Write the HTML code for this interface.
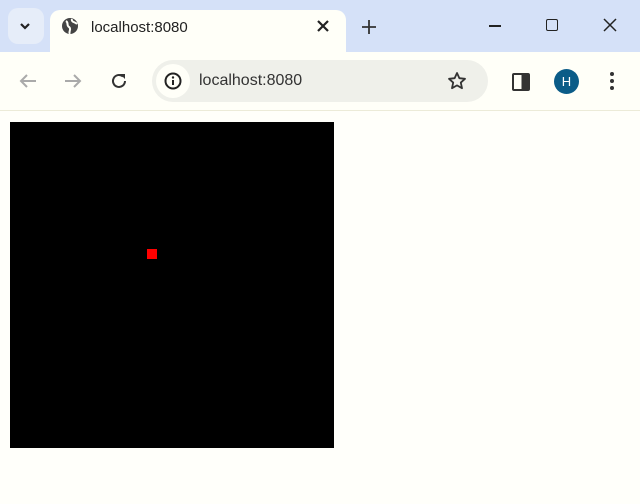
<!DOCTYPE html>
<html><head><style>
body{margin:0;width:640px;height:504px;background:#fffffa;font-family:"Liberation Sans",sans-serif;position:relative;overflow:hidden}
.a{position:absolute}
</style></head><body>
<div class="a" style="left:0;top:0;width:640px;height:52px;background:#d5e1f8"></div>
<div class="a" style="left:8px;top:8px;width:36px;height:36px;border-radius:10px;background:#e6edf9"></div>
<svg class="a" style="left:18px;top:19px" width="14" height="14"><path d="M3 5l4 4 4-4" stroke="#222" stroke-width="2.2" fill="none"/></svg>
<div class="a" style="left:50px;top:10px;width:296px;height:44px;background:#fffff8;border-radius:10px 10px 0 0"></div>
<svg class="a" style="left:61px;top:17px" width="18" height="18"><circle cx="9" cy="9" r="8" fill="#444"/><path d="M5 4c3 2 0 4 3 6s-1 5 1 7M11 2c-1 3 3 3 5 5" stroke="#fffff8" stroke-width="2" fill="none"/></svg>
<div class="a" style="left:91px;top:19px;font-size:15px;color:#222">localhost:8080</div>
<svg class="a" style="left:316px;top:19px" width="14" height="14"><path d="M2 2l10 10M12 2L2 12" stroke="#222" stroke-width="2.2"/></svg>
<svg class="a" style="left:361px;top:19px" width="16" height="16"><path d="M8 1v14M1 8h14" stroke="#333" stroke-width="1.8"/></svg>
<div class="a" style="left:489px;top:25px;width:12px;height:2px;background:#222"></div>
<div class="a" style="left:546px;top:19px;width:10px;height:10px;border:1.5px solid #222;border-radius:2px"></div>
<svg class="a" style="left:603px;top:18px" width="14" height="14"><path d="M1 1l12 12M13 1L1 13" stroke="#222" stroke-width="1.5"/></svg>
<div class="a" style="left:0;top:52px;width:640px;height:58px;background:#fffff8"></div>
<div class="a" style="left:0;top:110px;width:640px;height:1px;background:#ecebd8"></div>
<svg class="a" style="left:18px;top:72px" width="20" height="18"><path d="M18 9H3M9 3L3 9l6 6" stroke="#aaa" stroke-width="2" fill="none"/></svg>
<svg class="a" style="left:63px;top:72px" width="20" height="18"><path d="M2 9h15M11 3l6 6-6 6" stroke="#aaa" stroke-width="2" fill="none"/></svg>
<svg class="a" style="left:109px;top:71px" width="20" height="20"><path d="M16 10a6 6 0 1 1-2-4.5" stroke="#333" stroke-width="2" fill="none"/><path d="M11 3h5v5z" fill="#333"/></svg>
<div class="a" style="left:152px;top:60px;width:336px;height:42px;border-radius:21px;background:#eff0ea"></div>
<div class="a" style="left:156px;top:64px;width:34px;height:34px;border-radius:17px;background:#fffff8"></div>
<svg class="a" style="left:164px;top:72px" width="18" height="18"><circle cx="9" cy="9" r="7.5" stroke="#222" stroke-width="2" fill="none"/><path d="M9 8v5" stroke="#222" stroke-width="2"/><circle cx="9" cy="5.5" r="1.2" fill="#222"/></svg>
<div class="a" style="left:199px;top:72px;font-size:16px;color:#333">localhost:8080</div>
<svg class="a" style="left:447px;top:71px" width="20" height="20"><path d="M10 2l2.4 5.2 5.6.6-4.2 3.8 1.2 5.6L10 14.4 5 17.2l1.2-5.6L2 7.8l5.6-.6z" stroke="#333" stroke-width="1.8" fill="none" stroke-linejoin="round"/></svg>
<div class="a" style="left:512px;top:73px;width:14px;height:14px;border:2px solid #333;border-radius:2px;background:linear-gradient(90deg,transparent 55%,#333 55%)"></div>
<div class="a" style="left:554px;top:69px;width:25px;height:25px;border-radius:50%;background:#0b5c88;color:#fff;font-size:13px;text-align:center;line-height:25px">H</div>
<div class="a" style="left:610px;top:72px;width:4px;height:4px;border-radius:2px;background:#333;box-shadow:0 7px #333,0 14px #333"></div>
<div class="a" style="left:10px;top:122px;width:324px;height:326px;background:#000"></div>
<div class="a" style="left:147px;top:249px;width:10px;height:10px;background:#f00"></div>
</body></html>
